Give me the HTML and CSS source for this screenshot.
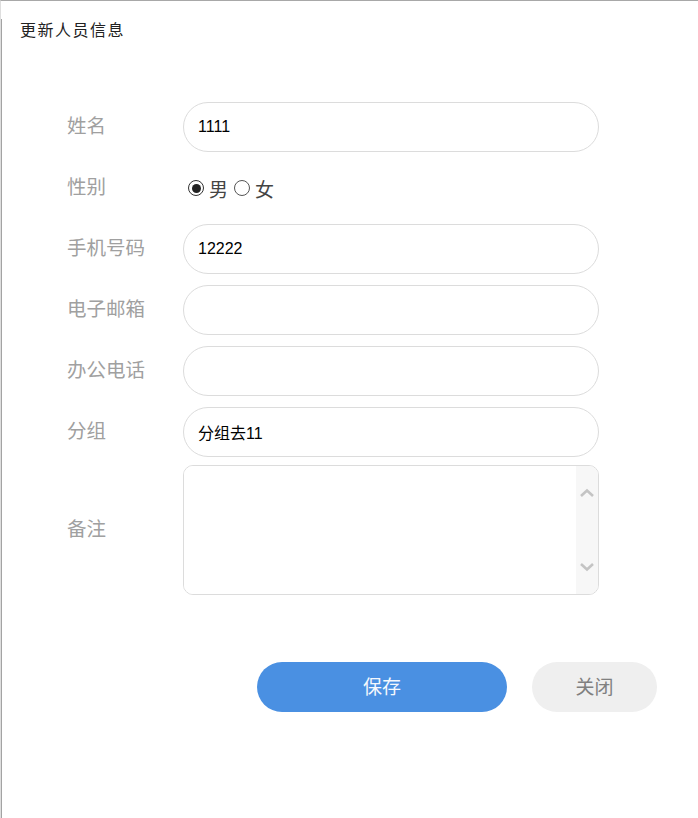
FILE: index.html
```html
<!DOCTYPE html>
<html lang="zh">
<head>
<meta charset="utf-8">
<title>更新人员信息</title>
<link rel="stylesheet" href="styles.css">
</head>
<body>
<div class="frame">
  <div class="win">
    <div class="title">更新人员信息</div>
    <form class="form">
      <div class="row">
        <label class="label">姓名</label>
        <input class="input" type="text" value="1111">
      </div>
      <div class="row">
        <label class="label">性别</label>
        <div class="radios">
          <span class="radio checked"></span><span class="rtext">男</span>
          <span class="radio"></span><span class="rtext">女</span>
        </div>
      </div>
      <div class="row">
        <label class="label">手机号码</label>
        <input class="input" type="text" value="12222">
      </div>
      <div class="row">
        <label class="label">电子邮箱</label>
        <input class="input" type="text" value="">
      </div>
      <div class="row">
        <label class="label">办公电话</label>
        <input class="input" type="text" value="">
      </div>
      <div class="row">
        <label class="label">分组</label>
        <input class="input" type="text" value="分组去11">
      </div>
      <div class="row row-area">
        <label class="label">备注</label>
        <div class="area">
          <textarea class="area-text"></textarea>
          <div class="scrollbar">
            <svg width="16" height="10" viewBox="0 0 16 10"><path d="M2 8 L8 2.5 L14 8" fill="none" stroke="#c4c4c4" stroke-width="2.6"/></svg>
            <svg width="16" height="10" viewBox="0 0 16 10"><path d="M2 2 L8 7.5 L14 2" fill="none" stroke="#c4c4c4" stroke-width="2.6"/></svg>
          </div>
        </div>
      </div>
      <div class="actions">
        <button type="button" class="btn btn-save">保存</button>
        <button type="button" class="btn btn-close">关闭</button>
      </div>
    </form>
  </div>
</div>
</body>
</html>
```
FILE: styles.css
```css
html, body {
  margin: 0;
  padding: 0;
  background: #fff;
}
body {
  font-family: "Noto Sans CJK SC", "Liberation Sans", sans-serif;
}
.frame {
  box-sizing: border-box;
  height: 818px;
  border-top: 1px solid #a8a8a8;
  border-left: 1px solid #dedede;
}
.win {
  box-sizing: border-box;
  height: 100%;
  border-left: 1px solid #a3a3a3;
}
.title {
  margin: 18px 0 0 18px;
  font-size: 16px;
  line-height: 20px;
  letter-spacing: 1.5px;
  color: #222;
}
.form {
  margin: 63px 0 0 65px;
}
.row {
  display: flex;
  align-items: center;
  height: 50px;
  margin-bottom: 11px;
}
.label {
  width: 116px;
  flex: none;
  font-size: 19.5px;
  line-height: 1;
  padding-bottom: 4px;
  color: #a0a0a0;
}
.input {
  box-sizing: border-box;
  width: 416px;
  height: 50px;
  border: 1px solid #dcdcdc;
  border-radius: 25px;
  padding: 0 14px;
  font-family: "Liberation Sans", "Noto Sans CJK SC", sans-serif;
  font-size: 16px;
  color: #000;
  outline: none;
  background: #fff;
}
.radios {
  display: flex;
  align-items: center;
  padding-left: 5px;
}
.radio {
  box-sizing: border-box;
  width: 16px;
  height: 16px;
  border: 1px solid #555;
  border-radius: 50%;
  display: flex;
  align-items: center;
  justify-content: center;
}
.radio.checked {
  border-color: #333;
}
.radio.checked::after {
  content: "";
  width: 9px;
  height: 9px;
  border-radius: 50%;
  background: #222;
}
.rtext {
  font-size: 19px;
  color: #444;
  margin: 0 6px 0 5px;
}
.row-area {
  height: 130px;
  margin-top: -3px;
}
.area {
  box-sizing: border-box;
  width: 416px;
  height: 130px;
  border: 1px solid #dcdcdc;
  border-radius: 10px;
  display: flex;
  overflow: hidden;
}
.area-text {
  flex: 1;
  border: none;
  outline: none;
  resize: none;
  overflow: hidden;
  padding: 8px 14px;
  font-size: 16px;
}
.scrollbar {
  width: 22px;
  flex: none;
  background: #f7f7f7;
  display: flex;
  flex-direction: column;
  align-items: center;
  justify-content: space-between;
  padding: 22px 0 22px;
  box-sizing: border-box;
}
.scrollbar svg {
  display: block;
}
.actions {
  display: flex;
  margin: 67px 0 0 190px;
  gap: 25px;
}
.btn {
  height: 50px;
  border: none;
  border-radius: 25px;
  font-family: "Noto Sans CJK SC", sans-serif;
  font-size: 19px;
  line-height: 1;
  padding: 0 0 3px;
  cursor: pointer;
}
.btn-save {
  width: 250px;
  background: #4a90e2;
  color: #f4f8fd;
}
.btn-close {
  width: 125px;
  background: #efefef;
  color: #808080;
}
```
